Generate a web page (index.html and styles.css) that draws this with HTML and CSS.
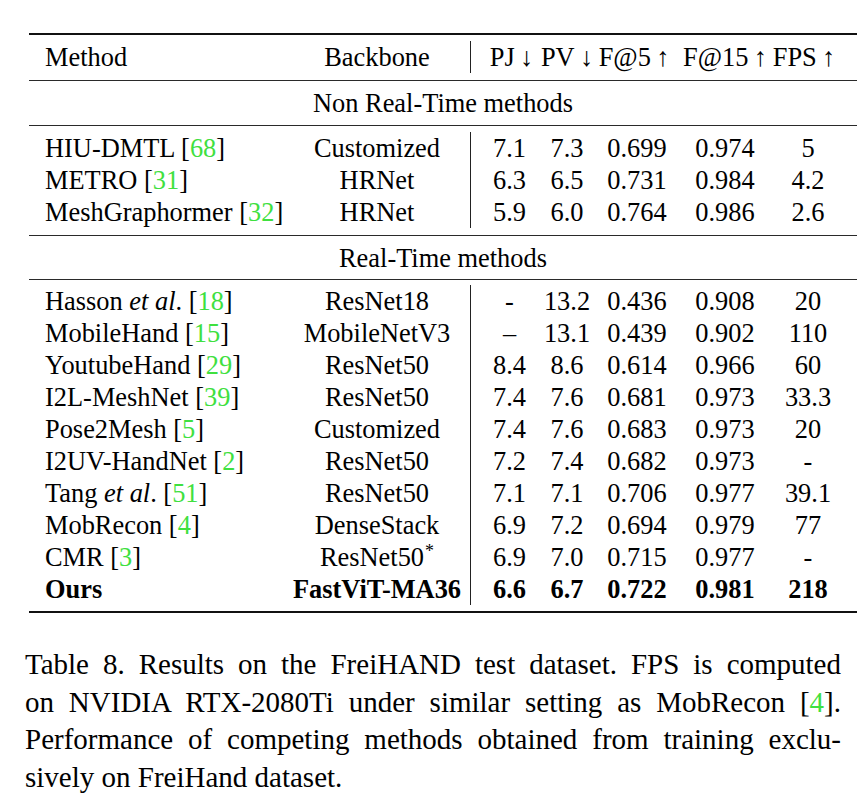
FILE: index.html
```html
<!DOCTYPE html>
<html lang="en">
<head>
<meta charset="utf-8">
<title>Table 8 – FreiHAND results</title>
<link rel="stylesheet" href="styles.css">
</head>
<body>
<div class="tbl">
  <div class="sec head">
    <div class="row">
      <span class="m">Method</span>
      <span>Backbone</span>
      <span class="pj h-pj">PJ&#8201;&darr;</span>
      <span>PV&#8201;&darr;</span>
      <span class="h-f5">F@5&#8201;&uarr;</span>
      <span>F@15&#8201;&uarr;</span>
      <span class="h-fps">FPS&#8201;&uarr;</span>
    </div>
  </div>
  <div class="sec title">Non Real-Time methods</div>
  <div class="sec g1">
    <div class="row"><span class="m"><span>HIU-DMTL [<span class="cite">68</span>]</span></span><span>Customized</span><span class="pj">7.1</span><span>7.3</span><span>0.699</span><span>0.974</span><span>5</span></div>
    <div class="row"><span class="m"><span>METRO [<span class="cite">31</span>]</span></span><span>HRNet</span><span class="pj">6.3</span><span>6.5</span><span>0.731</span><span>0.984</span><span>4.2</span></div>
    <div class="row"><span class="m"><span>MeshGraphormer [<span class="cite">32</span>]</span></span><span>HRNet</span><span class="pj">5.9</span><span>6.0</span><span>0.764</span><span>0.986</span><span>2.6</span></div>
  </div>
  <div class="sec title t2">Real-Time methods</div>
  <div class="sec g2">
    <div class="row"><span class="m"><span>Hasson <i>et al</i>. [<span class="cite">18</span>]</span></span><span>ResNet18</span><span class="pj">-</span><span>13.2</span><span>0.436</span><span>0.908</span><span>20</span></div>
    <div class="row"><span class="m"><span>MobileHand [<span class="cite">15</span>]</span></span><span>MobileNetV3</span><span class="pj">&ndash;</span><span>13.1</span><span>0.439</span><span>0.902</span><span>110</span></div>
    <div class="row"><span class="m"><span>YoutubeHand [<span class="cite">29</span>]</span></span><span>ResNet50</span><span class="pj">8.4</span><span>8.6</span><span>0.614</span><span>0.966</span><span>60</span></div>
    <div class="row"><span class="m"><span>I2L-MeshNet [<span class="cite">39</span>]</span></span><span>ResNet50</span><span class="pj">7.4</span><span>7.6</span><span>0.681</span><span>0.973</span><span>33.3</span></div>
    <div class="row"><span class="m"><span>Pose2Mesh [<span class="cite">5</span>]</span></span><span>Customized</span><span class="pj">7.4</span><span>7.6</span><span>0.683</span><span>0.973</span><span>20</span></div>
    <div class="row"><span class="m"><span>I2UV-HandNet [<span class="cite">2</span>]</span></span><span>ResNet50</span><span class="pj">7.2</span><span>7.4</span><span>0.682</span><span>0.973</span><span>-</span></div>
    <div class="row"><span class="m"><span>Tang <i>et al</i>. [<span class="cite">51</span>]</span></span><span>ResNet50</span><span class="pj">7.1</span><span>7.1</span><span>0.706</span><span>0.977</span><span>39.1</span></div>
    <div class="row"><span class="m"><span>MobRecon [<span class="cite">4</span>]</span></span><span>DenseStack</span><span class="pj">6.9</span><span>7.2</span><span>0.694</span><span>0.979</span><span>77</span></div>
    <div class="row"><span class="m"><span>CMR [<span class="cite">3</span>]</span></span><span><span>ResNet50<span class="sup">*</span></span></span><span class="pj">6.9</span><span>7.0</span><span>0.715</span><span>0.977</span><span>-</span></div>
    <div class="row bold"><span class="m">Ours</span><span>FastViT-MA36</span><span class="pj">6.6</span><span>6.7</span><span>0.722</span><span>0.981</span><span>218</span></div>
  </div>
</div>
<p class="caption">
  <span class="ln">Table 8. Results on the FreiHAND test dataset. FPS is computed</span>
  <span class="ln">on NVIDIA RTX-2080Ti under similar setting as MobRecon [<span class="cite">4</span>].</span>
  <span class="ln">Performance of competing methods obtained from training exclu-</span>
  <span class="ln last">sively on FreiHand dataset.</span>
</p>
</body>
</html>
```
FILE: styles.css
```css
html, body {
  margin: 0;
  padding: 0;
  background: #ffffff;
  color: #000000;
  font-family: "Liberation Serif", "Times New Roman", serif;
  overflow: hidden;
}

.tbl {
  margin: 33px 0 0 29px;
  width: 828px;
  font-size: 26.4px;
}

.sec {
  border-top: 1px solid #2a2a2a;
  padding: 6px 0;
}

.sec.head {
  border-top: 2px solid #111;
  padding: 6px 0 7px;
}

.sec.g1 {
  padding: 6px 0 7px;
}

.sec.t2 {
  padding: 6px 0 5px;
}

.sec.g2 {
  padding: 5px 0 6px;
  border-bottom: 2px solid #111;
}

.title {
  text-align: center;
  line-height: 32px;
  height: 32px;
}

.row {
  display: grid;
  grid-template-columns: 255px 186px 78px 38px 102px 74px 92px;
  height: 32px;
  line-height: 32px;
  white-space: nowrap;
}

.row > span {
  display: flex;
  justify-content: center;
  box-sizing: border-box;
}

.row > .m {
  justify-content: flex-start;
  padding-left: 16px;
}

.row > .pj {
  border-left: 1px solid #222;
}

.row > .h-pj {
  padding-left: 4px;
}

.row > .h-f5 {
  padding-right: 6px;
}

.row > .h-fps {
  padding-right: 8px;
}

.bold {
  font-weight: bold;
}

.cite {
  color: #3fe03f;
}

.sup {
  font-size: 0.68em;
  line-height: 0;
  position: relative;
  top: -0.5em;
  margin-left: 1px;
}

.caption {
  margin: 33px 0 0 25px;
  width: 816px;
  font-size: 29px;
  line-height: 37.5px;
}

.caption .ln {
  display: block;
  text-align: justify;
  text-align-last: justify;
}

.caption .ln.last {
  text-align-last: auto;
}
```
